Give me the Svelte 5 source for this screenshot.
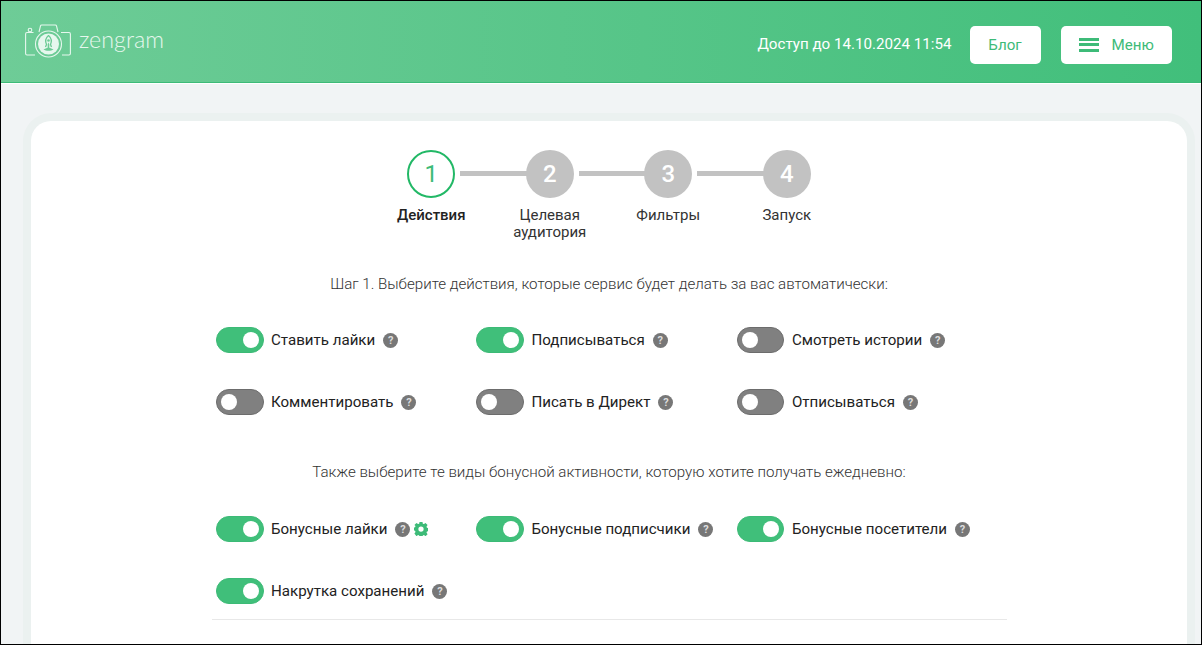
<script>
const actions = [
  { label: 'Ставить лайки', on: true },
  { label: 'Подписываться', on: true },
  { label: 'Смотреть истории', on: false },
  { label: 'Комментировать', on: false },
  { label: 'Писать в Директ', on: false },
  { label: 'Отписываться', on: false }
]
const bonus = [
  { label: 'Бонусные лайки', on: true, gear: true },
  { label: 'Бонусные подписчики', on: true },
  { label: 'Бонусные посетители', on: true },
  { label: 'Накрутка сохранений', on: true }
]
const steps = ['Действия', 'Целевая аудитория', 'Фильтры', 'Запуск']
</script>

{#snippet option(item)}
  <div class="option">
    <span class="toggle" class:on={item.on}><span class="knob"></span></span>
    <span class="label">{item.label}</span>
    <span class="help">?</span>
    {#if item.gear}
      <svg class="gear" viewBox="0 0 24 24" width="14" height="14">
        <path fill="#3dbb78" fill-rule="evenodd" d="M9.500 0h5l.6 3.300 1.900.8L19.800 2.200 23.300 5.700l-1.900 2.800.8 1.900 3.300.6v5l-3.300.6-.8 1.900 1.900 2.800-3.500 3.500-2.800-1.900-1.900.8-.6 3.300h-5l-.6-3.300-1.900-.8-2.800 1.900L.7 20.300l1.900-2.800-.8-1.900L-1.500 15v-5l3.300-.6.8-1.900L.7 5.700 4.200 2.200 7 4.100l1.900-.8zM12 8a4.500 4.500 0 1 0 0 9 4.500 4.500 0 0 0 0-9z" transform="translate(0 -.5)"/>
      </svg>
    {/if}
  </div>
{/snippet}

<div class="page">
  <header>
    <div class="logo">
      <svg width="46" height="34" viewBox="0 0 46 34" fill="none" stroke="#e6f7ee" stroke-width="1.100">
        <path d="M8.500 8.500H2A1.500 1.500 0 0 0 .6 10v19.500A1.500 1.500 0 0 0 2 31h8"/>
        <path d="M36 8.500h8A1.500 1.500 0 0 1 45.400 10v19.500A1.500 1.500 0 0 1 44 31h-7"/>
        <circle cx="5" cy="6" r="1.800"/>
        <path d="M14 8l1.500-6q.2-1 1.200-1h13.600q1 0 1.200 1L33 8"/>
        <circle cx="23.500" cy="20" r="13"/>
        <circle cx="23.500" cy="20" r="10.500" fill="#e6f7ee" stroke="none"/>
        <path d="M23.500 11.500c-2.800 2.500-3.400 6-2 9l-1 2.500M23.500 11.500c2.800 2.500 3.400 6 2 9l1 2.500" stroke="#6ccb95" stroke-width="1.300"/>
        <circle cx="23.500" cy="16.500" r="1.300" fill="#6ccb95" stroke="none"/>
        <path d="M23.500 18.500c1 1.500 1 3.500.6 5l4.400 2c-1.300.9-3 1.300-5 1.300s-3.700-.4-5-1.300l4.400-2c-.4-1.500-.4-3.500.6-5z" fill="#6ccb95" stroke="none"/>
      </svg>
      <span class="logo-text">zengram</span>
    </div>
    <div class="header-right">
      <span class="access">Доступ до 14.10.2024 11:54</span>
      <button class="blog">Блог</button>
      <button class="menu"><span class="burger"><i></i><i></i><i></i></span>Меню</button>
    </div>
  </header>

  <main>
    <section class="card">
      <div class="steps">
        {#each steps as step, i}
          <div class="step" class:active={i === 0}>
            <div class="circle">{i + 1}</div>
            <div class="step-name">{step}</div>
          </div>
        {/each}
      </div>

      <p class="hint first">Шаг 1. Выберите действия, которые сервис будет делать за вас автоматически:</p>
      <div class="options">
        {#each actions as item}{@render option(item)}{/each}
      </div>

      <p class="hint second">Также выберите те виды бонусной активности, которую хотите получать ежедневно:</p>
      <div class="options bonus">
        {#each bonus as item}{@render option(item)}{/each}
      </div>
      <div class="divider"></div>
    </section>
  </main>
</div>

<style>
:global(body) {
  margin: 0;
  background: #000;
}
.page {
  height: 643px;
  margin: 1px;
  overflow: hidden;
  background: #f1f4f5;
  font-family: Roboto, "Liberation Sans", sans-serif;
}
header {
  height: 83px;
  box-sizing: border-box;
  display: flex;
  align-items: center;
  justify-content: space-between;
  padding: 0 29px 0 24px;
  background: linear-gradient(90deg, #6ecc97, #41bf7b);
  border-bottom: 1px solid #fff;
  box-shadow: inset 0 -1px 0 #3dbb78;
}
.logo {
  display: flex;
  align-items: center;
  gap: 8px;
  margin-bottom: 2px;
}
.logo-text {
  font-family: Lato, sans-serif;
  font-size: 23.300px;
  font-weight: 300;
  color: #e6f7ee;
  margin-bottom: 4px;
}
.header-right {
  display: flex;
  align-items: center;
  margin-top: 5px;
}
.access {
  color: #fff;
  font-size: 15.150px;
  margin: 0 18px 1px 0;
}
button {
  height: 38px;
  border: 0;
  border-radius: 5px;
  background: #fff;
  color: #3dbb78;
  font: 15.150px Roboto, sans-serif;
}
.blog {
  width: 71px;
  margin-right: 20px;
}
.menu {
  width: 111.500px;
  display: flex;
  align-items: center;
  justify-content: center;
  gap: 13px;
}
.burger {
  display: flex;
  flex-direction: column;
  gap: 2.500px;
}
.burger i {
  display: block;
  width: 20px;
  height: 3px;
  background: #3dbb78;
}
main {
  padding: 37px 14px 0 30px;
}
.card {
  height: 600px;
  padding-top: 29px;
  box-sizing: border-box;
  background: #fff;
  border-radius: 20px;
  box-shadow: 0 0 0 8px #ebf1f0;
}
.steps {
  display: flex;
  justify-content: center;
}
.step {
  width: 118.500px;
  display: flex;
  flex-direction: column;
  align-items: center;
  position: relative;
  font-size: 15px;
  color: #333;
  text-align: center;
  line-height: 17px;
}
.step:not(:last-child)::after {
  content: "";
  position: absolute;
  left: 88px;
  width: 68px;
  top: 21px;
  height: 5px;
  background: #c2c2c2;
}
.circle {
  width: 48px;
  height: 48px;
  box-sizing: border-box;
  border-radius: 50%;
  display: flex;
  align-items: center;
  justify-content: center;
  background: #c2c2c2;
  color: #fff;
  font-size: 24px;
  font-weight: 500;
  margin-bottom: 9px;
  position: relative;
  z-index: 1;
}
.active .circle {
  background: #fff;
  border: 2px solid #22b866;
  color: #3dbb78;
  font-weight: 400;
}
.active .step-name {
  font-weight: 500;
  color: #222;
}
.step-name {
  width: 90px;
}
.hint {
  margin: 0;
  text-align: center;
  font-size: 15.120px;
  font-weight: 300;
  color: #333;
}
.hint.first {
  margin-top: 34px;
}
.hint.second {
  margin-top: 30px;
}
.options {
  display: grid;
  grid-template-columns: repeat(3, 260.450px);
  grid-auto-rows: 62px;
  margin: 16px 0 0 185px;
}
.options.bonus {
  margin-top: 17px;
}
.option {
  display: flex;
  align-items: center;
  font-size: 15.100px;
  color: #222;
}
.toggle {
  width: 47.500px;
  height: 26px;
  box-sizing: border-box;
  border-radius: 13px;
  border: 1px solid #6c6c6c;
  background: #808080;
  padding: 4px;
  margin-right: 7.500px;
  display: flex;
}
.toggle.on {
  background: #40bf7a;
  border-color: #3cba76;
  justify-content: flex-end;
}
.knob {
  width: 16px;
  height: 16px;
  border-radius: 50%;
  background: #fff;
}
.help {
  width: 15px;
  height: 15px;
  border-radius: 50%;
  margin-left: 8px;
  background: #777;
  color: #ddd;
  font-size: 11px;
  font-weight: 700;
  line-height: 15px;
  text-align: center;
}
.gear {
  margin-left: 4px;
}
.divider {
  height: 1px;
  background: #e8e8e8;
  margin: -3px 180px 0 181px;
}
</style>
